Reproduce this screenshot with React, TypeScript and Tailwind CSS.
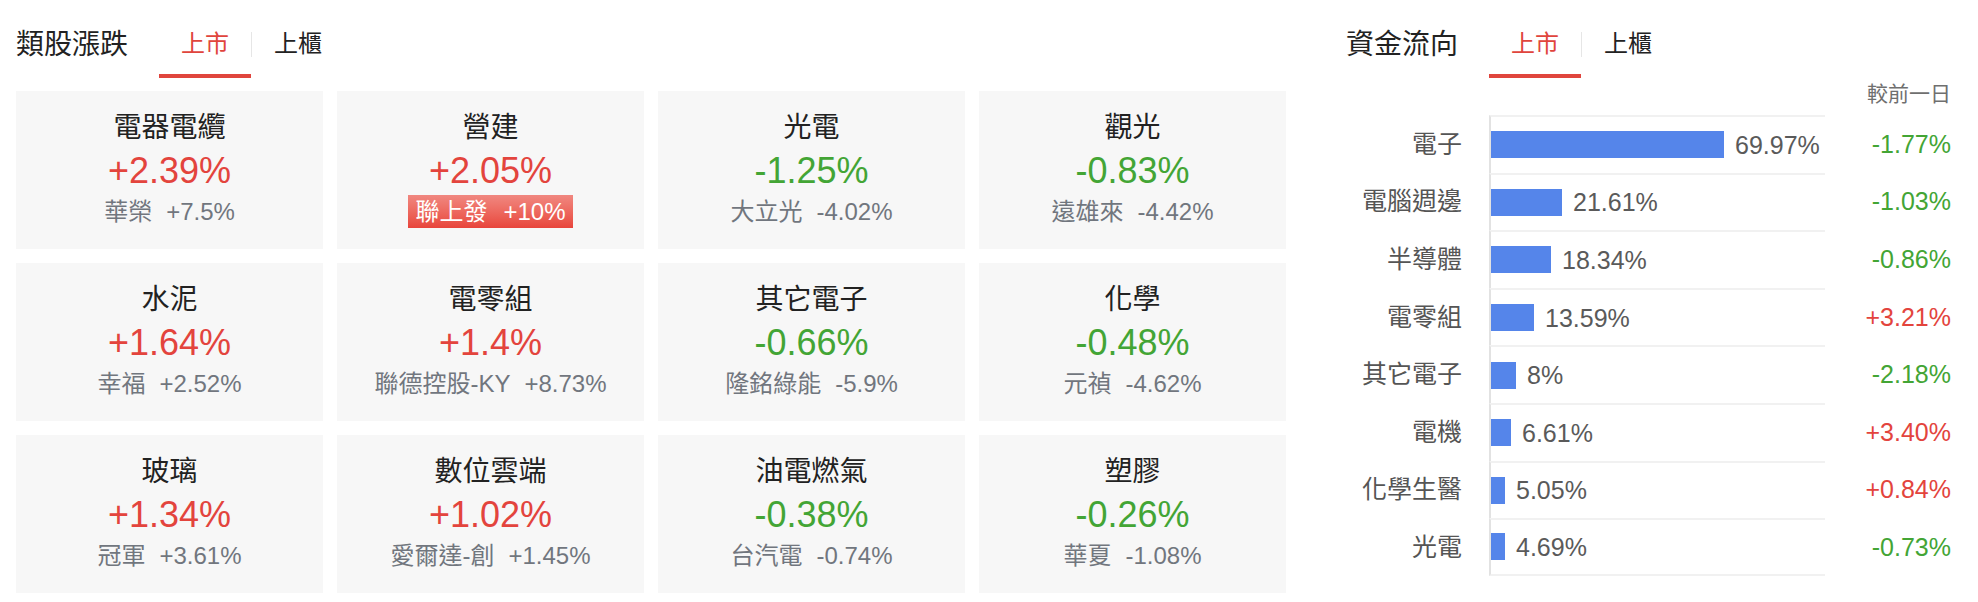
import React from "react";

type Sector = {
  name: string;
  pct: string;
  stock: string;
  stockPct: string;
  limit?: boolean;
};

const sectors: Sector[] = [
  { name: "電器電纜", pct: "+2.39%", stock: "華榮", stockPct: "+7.5%" },
  { name: "營建", pct: "+2.05%", stock: "聯上發", stockPct: "+10%", limit: true },
  { name: "光電", pct: "-1.25%", stock: "大立光", stockPct: "-4.02%" },
  { name: "觀光", pct: "-0.83%", stock: "遠雄來", stockPct: "-4.42%" },
  { name: "水泥", pct: "+1.64%", stock: "幸福", stockPct: "+2.52%" },
  { name: "電零組", pct: "+1.4%", stock: "聯德控股-KY", stockPct: "+8.73%" },
  { name: "其它電子", pct: "-0.66%", stock: "隆銘綠能", stockPct: "-5.9%" },
  { name: "化學", pct: "-0.48%", stock: "元禎", stockPct: "-4.62%" },
  { name: "玻璃", pct: "+1.34%", stock: "冠軍", stockPct: "+3.61%" },
  { name: "數位雲端", pct: "+1.02%", stock: "愛爾達-創", stockPct: "+1.45%" },
  { name: "油電燃氣", pct: "-0.38%", stock: "台汽電", stockPct: "-0.74%" },
  { name: "塑膠", pct: "-0.26%", stock: "華夏", stockPct: "-1.08%" },
];

const flows = [
  { name: "電子", share: "69.97%", bar: 233, change: "-1.77%" },
  { name: "電腦週邊", share: "21.61%", bar: 71, change: "-1.03%" },
  { name: "半導體", share: "18.34%", bar: 60, change: "-0.86%" },
  { name: "電零組", share: "13.59%", bar: 43, change: "+3.21%" },
  { name: "其它電子", share: "8%", bar: 25, change: "-2.18%" },
  { name: "電機", share: "6.61%", bar: 20, change: "+3.40%" },
  { name: "化學生醫", share: "5.05%", bar: 14, change: "+0.84%" },
  { name: "光電", share: "4.69%", bar: 14, change: "-0.73%" },
];

const isUp = (v: string) => v.startsWith("+");

function TabHeader({ title }: { title: string }) {
  return (
    <div className="flex h-[78px]">
      <div className="flex items-center pt-[11px] text-[28px] leading-[34px] text-[#222]">
        {title}
      </div>
      <div className="ml-[31px] flex items-center border-b-4 border-[#e0453d] px-[22px] pt-[14px] text-[24px] leading-[30px] text-[#e0453d]">
        上市
      </div>
      <div className="mt-[32px] h-[25px] w-px bg-[#e6e6e6]" />
      <div className="flex items-center border-b-4 border-transparent px-[22px] pt-[14px] text-[24px] leading-[30px] text-[#222]">
        上櫃
      </div>
    </div>
  );
}

function SectorCard({ s }: { s: Sector }) {
  return (
    <div className="flex flex-col items-center bg-[#f7f7f7] pt-[20px]">
      <div className="text-[28px] leading-[34px] text-[#222]">{s.name}</div>
      <div
        className={
          isUp(s.pct)
            ? "text-[36px] leading-[52px] text-[#e3443d]"
            : "text-[36px] leading-[52px] text-[#43a535]"
        }
      >
        {s.pct}
      </div>
      {s.limit ? (
        <div className="-mt-[2px] flex h-[33px] items-center gap-[16px] bg-gradient-to-b from-[#f08780] to-[#e8443b] px-[7px] text-[24px] leading-[33px] text-white">
          <span>{s.stock}</span>
          <span>{s.stockPct}</span>
        </div>
      ) : (
        <div className="flex gap-[14px] text-[24px] leading-[30px] text-[#71767e]">
          <span>{s.stock}</span>
          <span>{s.stockPct}</span>
        </div>
      )}
    </div>
  );
}

export default function App() {
  return (
    <div className="flex h-[602px] w-[1978px] overflow-hidden bg-white font-['Liberation_Sans','Noto_Sans_CJK_TC',sans-serif]">
      {/* 類股漲跌 */}
      <div className="ml-[16px] flex w-[1271px] flex-col">
        <TabHeader title="類股漲跌" />
        <div className="mt-[13px] grid grid-cols-[repeat(4,307px)] auto-rows-[158px] gap-[14px]">
          {sectors.map((s) => (
            <SectorCard key={s.name} s={s} />
          ))}
        </div>
      </div>

      {/* 資金流向 */}
      <div className="ml-[59px] flex w-[605px] flex-col">
        <TabHeader title="資金流向" />
        <div className="flex h-[37px] items-center justify-end pb-[6px] text-[21px] leading-[24px] text-[#6f6f6f]">
          較前一日
        </div>
        <div className="flex flex-col">
          {flows.map((f, i) => (
            <div key={f.name} className="flex h-[57.6px]">
              <div className="flex w-[143px] items-center justify-end pr-[27px] text-[25px] leading-[30px] text-[#555]">
                {f.name}
              </div>
              <div
                className={
                  i === flows.length - 1
                    ? "flex w-[336px] items-center border-t-2 border-b-2 border-l-2 border-t-[#f1f1f1] border-b-[#f1f1f1] border-l-[#e2e2e2]"
                    : "flex w-[336px] items-center border-t-2 border-l-2 border-t-[#f1f1f1] border-l-[#e2e2e2]"
                }
              >
                <div className="h-[27px] bg-[#5585ea]" style={{ width: f.bar }} />
                <span className="ml-[11px] text-[25px] leading-[30px] text-[#5a5a5a]">{f.share}</span>
              </div>
              <div
                className={
                  isUp(f.change)
                    ? "flex flex-1 items-center justify-end text-[25px] leading-[30px] text-[#e3443d]"
                    : "flex flex-1 items-center justify-end text-[25px] leading-[30px] text-[#43a535]"
                }
              >
                {f.change}
              </div>
            </div>
          ))}
        </div>
      </div>
    </div>
  );
}
